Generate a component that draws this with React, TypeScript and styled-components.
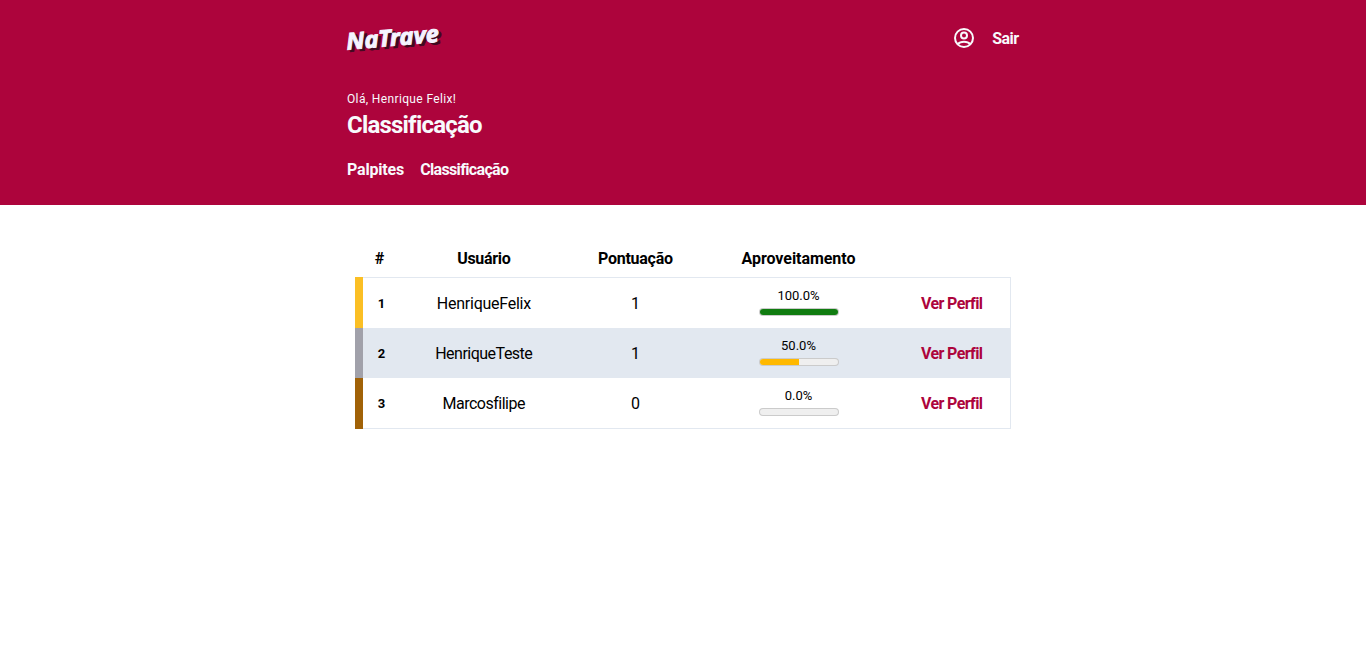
import React from "react";
import styled, { createGlobalStyle } from "styled-components";

const GlobalStyle = createGlobalStyle`
  * { box-sizing: border-box; }
  body { margin: 0; background: #fff; color: #000; font: 400 16px/24px Roboto, "Open Sans", sans-serif; }
  h1, p { margin: 0; }
  a { color: inherit; text-decoration: none; }
`;

const Header = styled.header`
  height: 205px;
  background: #ad043c;
  color: #f8fafc;
`;
const Container = styled.div`
  width: 672px;
  margin: 0 auto;
`;
const TopBar = styled.div`
  display: flex;
  align-items: center;
  justify-content: space-between;
  height: 76px;
`;
const Logo = styled.svg`
  display: block;
  width: 100px;
  height: 36px;
  overflow: visible;
`;
const Account = styled.div`
  display: flex;
  align-items: center;
  gap: 16px;
`;
const UserIcon = styled.svg`
  display: block;
  width: 24px;
  height: 24px;
  fill: none;
  stroke: currentColor;
  stroke-width: 2;
`;
const Label = styled.span<{ $spacing?: number }>`
  display: inline-block;
  letter-spacing: ${(p) => p.$spacing ?? 0}px;
  margin-right: ${(p) => -(p.$spacing ?? 0)}px;
  font-variant-ligatures: none;
`;
const NavLink = styled.a`
  font-weight: 700;
`;
const ExitLink = styled(NavLink)`
  padding-top: 2px;
`;
const Greeting = styled.p`
  padding-top: 13px;
  font-size: 12px;
  line-height: 20px;
`;
const Title = styled.h1`
  font-size: 24px;
  line-height: 32px;
  font-weight: 700;
`;
const Nav = styled.nav`
  display: flex;
  gap: 16px;
  padding-top: 17px;
`;
const Ranking = styled.section`
  width: 656px;
  margin: 36px auto 0;
`;
const Row = styled.div`
  display: grid;
  grid-template-columns: 45px 168px 135px 191px 1fr;
  align-items: center;
  justify-items: center;
`;
const HeadRow = styled(Row)`
  height: 36px;
  padding-bottom: 1px;
  font-weight: 700;
`;
const HeadRank = styled.span`
  padding-left: 4px;
`;
const BodyRow = styled(Row)<{ $medal: string; $shaded: boolean }>`
  height: 50px;
  padding-top: 2px;
  border-left: 8px solid ${(p) => p.$medal};
  border-right: 1px solid #e2e8f0;
  grid-template-columns: 37px 168px 135px 191px 1fr;
  background: ${(p) => (p.$shaded ? "#e2e8f0" : "#fff")};
  &:nth-child(2) { height: 51px; box-shadow: inset 0 1px #e2e8f0; padding-top: 3px; }
  &:last-child { height: 51px; box-shadow: inset 0 -1px #e2e8f0; padding-bottom: 1px; }
`;
const Rank = styled.span`
  font-size: 13px;
  font-weight: 700;
`;
const Score = styled.div`
  display: flex;
  flex-direction: column;
  align-items: center;
  font-size: 13px;
  line-height: 18px;
`;
const Meter = styled.meter`
  display: block;
  width: 80px;
  height: 16px;
  margin-top: -1px;
  margin-bottom: 1px;
  font-size: 16px;
`;
const ProfileLink = styled.a`
  color: #ad043c;
  font-weight: 700;
`;

const users = [
  { name: "HenriqueFelix", spacing: -0.25, points: 1, rate: 100, medal: "#fbbf24" },
  { name: "HenriqueTeste", spacing: -0.5, points: 1, rate: 50, medal: "#a1a1aa" },
  { name: "Marcosfilipe", spacing: -0.5, points: 0, rate: 0, medal: "#a16207" },
];

export default function App() {
  return (
    <>
      <GlobalStyle />
      <Header>
        <Container>
          <TopBar>
            <Logo viewBox="0 0 100 36" aria-label="NaTrave">
              <g fontFamily="Noto Sans, sans-serif" fontWeight="700" fontStyle="italic" fontSize="23" transform="rotate(-5 0 30)" strokeWidth="0.9">
                <text x="2.5" y="32" fill="#3f0a20" stroke="#3f0a20" textLength="93" lengthAdjust="spacingAndGlyphs">NaTrave</text>
                <text x="0" y="29.8" fill="#f5f3ff" stroke="#f5f3ff" textLength="93" lengthAdjust="spacingAndGlyphs">NaTrave</text>
              </g>
            </Logo>
            <Account>
              <UserIcon viewBox="0 0 24 24">
                <circle cx="12" cy="12" r="9" />
                <circle cx="12" cy="9.5" r="3" />
                <path d="M5.8 18.2C7.2 16.5 9.3 15.7 12 15.7s4.8.8 6.2 2.5" />
              </UserIcon>
              <ExitLink href="#"><Label $spacing={-0.6}>Sair</Label></ExitLink>
            </Account>
          </TopBar>
          <Greeting><Label $spacing={0.36}>Olá, Henrique Felix!</Label></Greeting>
          <Title><Label $spacing={-0.8}>Classificação</Label></Title>
          <Nav>
            <NavLink href="#"><Label $spacing={-0.2}>Palpites</Label></NavLink>
            <NavLink href="#"><Label $spacing={-0.65}>Classificação</Label></NavLink>
          </Nav>
        </Container>
      </Header>
      <Ranking>
        <HeadRow>
          <HeadRank>#</HeadRank>
          <Label $spacing={-0.3}>Usuário</Label>
          <Label $spacing={-0.25}>Pontuação</Label>
          <Label $spacing={-0.05}>Aproveitamento</Label>
        </HeadRow>
        {users.map((user, i) => (
          <BodyRow key={user.name} $medal={user.medal} $shaded={i % 2 === 1}>
            <Rank>{i + 1}</Rank>
            <Label $spacing={user.spacing}>{user.name}</Label>
            <span>{user.points}</span>
            <Score>
              <Label>{user.rate.toFixed(1)}%</Label>
              <Meter min={0} max={100} low={30} high={70} optimum={100} value={user.rate} />
            </Score>
            <ProfileLink href="#"><Label $spacing={-0.62}>Ver Perfil</Label></ProfileLink>
          </BodyRow>
        ))}
      </Ranking>
    </>
  );
}
